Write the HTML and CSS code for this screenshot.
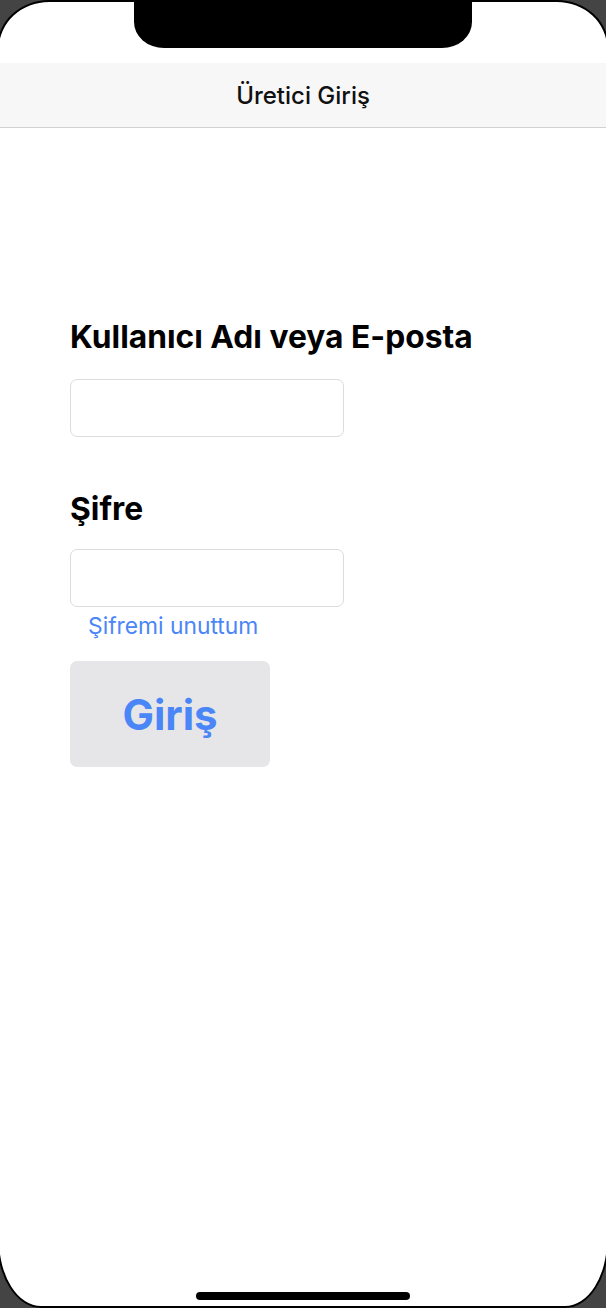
FILE: index.html
```html
<!DOCTYPE html>
<html lang="tr">
<head>
<meta charset="utf-8">
<title>Üretici Giriş</title>
<link rel="stylesheet" href="styles.css">
</head>
<body>
<div class="device">
  <div class="notch"></div>
  <div class="status"></div>
  <header class="navbar"><h1 class="nav-title">Üretici Giriş</h1></header>
  <main class="content">
    <form class="login-form">
      <label class="field-label" for="user">Kullanıcı Adı veya E-posta</label>
      <input class="field-input" id="user" type="text">
      <label class="field-label second" for="pass">Şifre</label>
      <input class="field-input" id="pass" type="password">
      <a class="forgot-link" href="#">Şifremi unuttum</a>
      <button class="login-button" type="button">Giriş</button>
    </form>
  </main>
  <div class="home-indicator"></div>
</div>
</body>
</html>
```
FILE: styles.css
```css
html, body {
  margin: 0;
  padding: 0;
  height: 100%;
  overflow: hidden;
  background: #444444;
}

.device {
  position: relative;
  box-sizing: border-box;
  height: 1308px;
  margin: 0 -3px;
  background: #ffffff;
  border: 2px solid #000000;
  border-radius: 52px 52px 44px 44px / 48px 48px 68px 68px;
  display: flex;
  flex-direction: column;
  font-family: Inter, "Noto Sans", "Liberation Sans", sans-serif;
}

.notch {
  position: absolute;
  top: -2px;
  left: 135px;
  width: 338px;
  height: 48px;
  background: #000000;
  border-radius: 0 0 30px 30px / 0 0 26px 26px;
}

.status {
  height: 61px;
  flex: none;
}

.navbar {
  flex: none;
  height: 64px;
  background: #f7f7f7;
  border-bottom: 1px solid #d2d2d2;
  display: flex;
  align-items: center;
  justify-content: center;
}

.nav-title {
  margin: 0;
  font-size: 24px;
  font-weight: 500;
  color: #111111;
}

.content {
  flex: 1;
  padding-left: 71px;
}

.login-form {
  display: flex;
  flex-direction: column;
  align-items: flex-start;
  padding-top: 190px;
}

.field-label {
  font-size: 31.75px;
  line-height: 38px;
  font-weight: 700;
  color: #000000;
}

.field-label.second {
  margin-top: 53px;
}

.field-input {
  box-sizing: border-box;
  width: 274px;
  height: 58px;
  margin: 23px 0 0;
  border: 1px solid #dcdcdc;
  border-radius: 7px;
  background: #ffffff;
  font: inherit;
}

.field-label.second + .field-input {
  margin-top: 21px;
}

.forgot-link {
  margin: 5px 0 0 18px;
  font-size: 22.8px;
  line-height: 27px;
  color: #4a86f7;
  text-decoration: none;
}

.login-button {
  margin-top: 22px;
  width: 200px;
  height: 106px;
  border: none;
  border-radius: 7px;
  background: #e6e6e8;
  color: #4a86f7;
  font-family: inherit;
  font-size: 42px;
  font-weight: 700;
  padding: 0;
}

.home-indicator {
  flex: none;
  align-self: center;
  width: 214px;
  height: 8px;
  margin-bottom: 6px;
  border-radius: 4px;
  background: #000000;
}
```
